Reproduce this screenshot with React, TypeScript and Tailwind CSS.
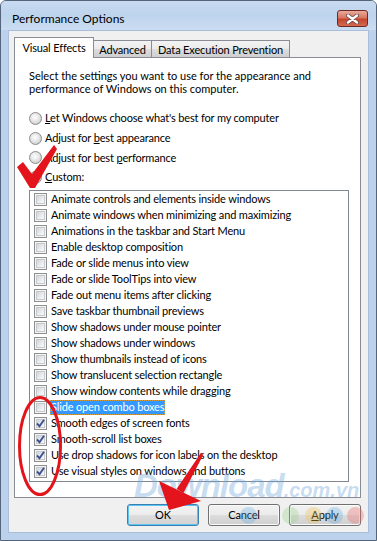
import React from "react";

const items: { label: string; checked: boolean; selected?: boolean }[] = [
  { label: "Animate controls and elements inside windows", checked: false },
  { label: "Animate windows when minimizing and maximizing", checked: false },
  { label: "Animations in the taskbar and Start Menu", checked: false },
  { label: "Enable desktop composition", checked: false },
  { label: "Fade or slide menus into view", checked: false },
  { label: "Fade or slide ToolTips into view", checked: false },
  { label: "Fade out menu items after clicking", checked: false },
  { label: "Save taskbar thumbnail previews", checked: false },
  { label: "Show shadows under mouse pointer", checked: false },
  { label: "Show shadows under windows", checked: false },
  { label: "Show thumbnails instead of icons", checked: false },
  { label: "Show translucent selection rectangle", checked: false },
  { label: "Show window contents while dragging", checked: false },
  { label: "Slide open combo boxes", checked: false, selected: true },
  { label: "Smooth edges of screen fonts", checked: true },
  { label: "Smooth-scroll list boxes", checked: true },
  { label: "Use drop shadows for icon labels on the desktop", checked: true },
  { label: "Use visual styles on windows and buttons", checked: true },
];

function Checkbox({ checked }: { checked: boolean }) {
  return (
    <span className="relative w-[13px] h-[13px] shrink-0 border border-[#8e8f8f] bg-[#f4f4f4] p-[1px] flex">
      <span className="flex-1 border border-[#c6c9ce] bg-[linear-gradient(135deg,#d2d5da_0%,#eceef0_60%,#f8f8f8_100%)]" />
      {checked && (
        <svg className="absolute left-0 top-0" width="11" height="11" viewBox="0 0 11 11">
          <polyline points="2,5.5 4.5,8.2 9,1.8" fill="none" stroke="#3d4f8c" strokeWidth="1.9" />
        </svg>
      )}
    </span>
  );
}

function Radio() {
  return (
    <span className="w-[13px] h-[13px] shrink-0 rounded-full border border-[#8c8c8c] bg-[radial-gradient(circle_at_45%_40%,#ffffff_0%,#e6e6e6_45%,#bdbdbd_100%)]" />
  );
}

function RadioRow({ h, children }: { h: string; children: React.ReactNode }) {
  return (
    <div className={`flex items-center gap-[3px] ${h}`}>
      <Radio />
      <span className="leading-[14px]">{children}</span>
    </div>
  );
}

function Btn({ children, def }: { children: React.ReactNode; def?: boolean }) {
  return (
    <div
      className={
        def
          ? "w-[72px] h-[22px] rounded-[3px] border border-[#3c7fb1] shadow-[inset_0_0_0_1px_#5cc4f2] bg-[linear-gradient(to_bottom,#f4f4f4_0%,#ececec_50%,#dedede_50%,#d2d2d2_100%)] flex items-center justify-center"
          : "w-[72px] h-[22px] rounded-[3px] border border-[#707070] shadow-[inset_0_0_0_1px_#fbfbfb] bg-[linear-gradient(to_bottom,#f2f2f2_0%,#ebebeb_50%,#dddddd_50%,#cfcfcf_100%)] flex items-center justify-center"
      }
    >
      <span className="leading-[14px]">{children}</span>
    </div>
  );
}

export default function App() {
  return (
    <div className="relative w-[377px] h-[541px] overflow-hidden bg-white font-['Lato',sans-serif] text-[11px] tracking-[-0.15px] text-black">
      <div className="w-full h-full flex flex-col border border-[#54647a] rounded-t-[6px] bg-[#bcd2ec]">
        {/* title bar */}
        <div className="h-[29px] shrink-0 flex justify-between items-start pl-[11px] pr-[8px] rounded-t-[5px] bg-[linear-gradient(to_bottom,#c7daf0_0%,#bed4ed_50%,#cadcf1_100%)]">
          <span className="pt-[9px] leading-[17px] text-[12px] tracking-normal">Performance Options</span>
          <div className="mt-[9px] w-[31px] h-[17px] rounded-[3px] border border-[#6e2a22] bg-[linear-gradient(to_bottom,#e9aa9c_0%,#d97661_45%,#c5452e_55%,#d26a50_100%)] flex items-center justify-center">
            <svg width="13" height="10" viewBox="0 0 13 10">
              <path d="M2 1.5 L11 8.5 M11 1.5 L2 8.5" stroke="#6a4a48" strokeWidth="4" strokeLinecap="round" />
              <path d="M2 1.5 L11 8.5 M11 1.5 L2 8.5" stroke="#ffffff" strokeWidth="2.3" strokeLinecap="round" />
            </svg>
          </div>
        </div>
        {/* client */}
        <div className="mx-[7px] flex-1 bg-[#f0f0f0] border border-[#a9bed8] flex flex-col pl-[5px] pt-[6px]">
          {/* tabs */}
          <div className="flex items-end h-[20px] relative z-10">
            <div className="w-[80px] h-[21px] -mb-px bg-white border border-b-0 border-[#898c95] flex items-start justify-center pt-[2px]">
              <span className="leading-[15px]">Visual Effects</span>
            </div>
            <div className="w-[59px] h-[17px] -ml-px border border-b-0 border-[#898c95] bg-[linear-gradient(to_bottom,#f3f3f3_0%,#ebebeb_50%,#dddddd_50%,#cfcfcf_100%)] flex items-center justify-center">
              <span className="leading-[15px]">Advanced</span>
            </div>
            <div className="w-[139px] h-[17px] -ml-px border border-b-0 border-[#898c95] bg-[linear-gradient(to_bottom,#f3f3f3_0%,#ebebeb_50%,#dddddd_50%,#cfcfcf_100%)] flex items-center justify-center">
              <span className="leading-[15px] whitespace-nowrap">Data Execution Prevention</span>
            </div>
          </div>
          {/* panel */}
          <div className="w-[347px] h-[441px] border border-[#898c95] bg-white pl-[14px] pt-[11px] flex flex-col">
            <p className="leading-[13px] tracking-normal">
              Select the settings you want to use for the appearance and
              <br />
              performance of Windows on this computer.
            </p>
            <div className="mt-[13px] flex flex-col">
              <RadioRow h="h-[20px]">
                <u>L</u>et Windows choose what's best for my computer
              </RadioRow>
              <RadioRow h="h-[20px]">
                Adjust for <u>b</u>est appearance
              </RadioRow>
              <RadioRow h="h-[19px]">
                Adjust for best <u>p</u>erformance
              </RadioRow>
              <RadioRow h="h-[20px]">
                <u>C</u>ustom:
              </RadioRow>
            </div>
            <div className="mt-[3px] w-[320px] h-[292px] border border-[#828790] bg-white pl-[4px] flex flex-col">
              {items.map((it) => (
                <div key={it.label} className="h-[16px] flex items-center">
                  <Checkbox checked={it.checked} />
                  {it.selected ? (
                    <span className="ml-[3px] px-[1px] h-[15px] flex items-center bg-[#3399ff] text-white outline outline-1 outline-dotted outline-[#d49a3c] -outline-offset-1 leading-[14px]">
                      {it.label}
                    </span>
                  ) : (
                    <span className="ml-[4px] leading-[14px]">{it.label}</span>
                  )}
                </div>
              ))}
            </div>
          </div>
          {/* buttons */}
          <div className="w-[347px] mt-[6px] flex justify-end gap-[9px]">
            <Btn def>OK</Btn>
            <Btn>Cancel</Btn>
            <Btn>
              <u>A</u>pply
            </Btn>
          </div>
        </div>
        <div className="h-[7px] shrink-0" />
      </div>

      {/* watermark */}
      <div className="absolute left-[134px] top-[469px] flex items-baseline italic font-black font-['Liberation_Sans',sans-serif] tracking-normal text-[#6fa6dc]/40 pointer-events-none">
        <span className="text-[33px] leading-[34px] tracking-[-1px]">Download</span>
        <span className="text-[20px] leading-[20px]">.com.vn</span>
      </div>
      <div className="absolute left-[240px] top-[507px] w-[17px] h-[17px] rounded-full bg-[#5aa9e6]/30 pointer-events-none" />
      <div className="absolute left-[282px] top-[507px] w-[17px] h-[17px] rounded-full bg-[#8cd17a]/30 pointer-events-none" />
      <div className="absolute left-[305px] top-[507px] w-[17px] h-[17px] rounded-full bg-[#f2c34e]/35 pointer-events-none" />
      <div className="absolute left-[326px] top-[507px] w-[17px] h-[17px] rounded-full bg-[#5aa9e6]/30 pointer-events-none" />
      <div className="absolute left-[347px] top-[507px] w-[17px] h-[17px] rounded-full bg-[#ee6b6b]/35 pointer-events-none" />

      {/* red annotations */}
      <svg className="absolute left-0 top-0 pointer-events-none" width="377" height="541" viewBox="0 0 377 541">
        <path d="M17 167 L23 162 L32 174 L54 145 L57 149 L35 188 L30 188 Z" fill="#e3141b" />
        <ellipse cx="40" cy="446" rx="20.5" ry="48.5" fill="none" stroke="#e3141b" strokeWidth="3" />
        <path d="M203.3 454.8 L200.7 453.2 L176.6 489 L183.4 493 Z" fill="#e3141b" />
        <path d="M159 481 L201 501 L169 510 Z" fill="#e3141b" />
      </svg>
    </div>
  );
}
